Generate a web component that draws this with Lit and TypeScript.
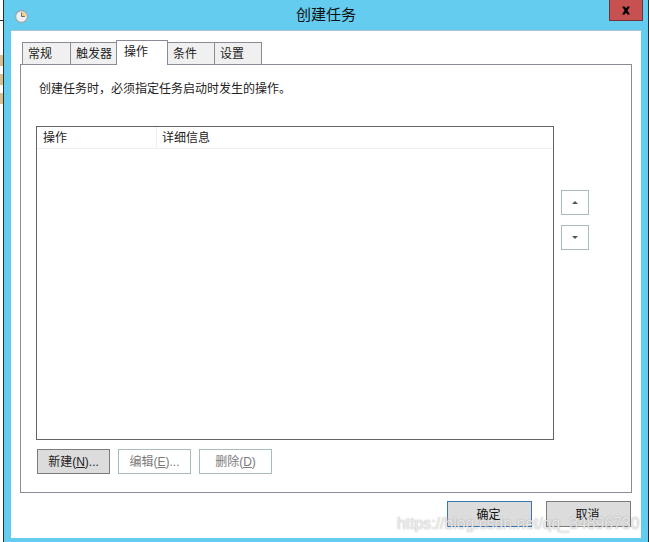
import { LitElement, html, css } from "lit";
import { customElement } from "lit/decorators.js";

@customElement("app-root")
export class AppRoot extends LitElement {
  static styles = css`
    :host {
      display: block;
      width: 649px;
      height: 542px;
      font-family: "Liberation Sans", "Noto Sans CJK SC", sans-serif;
      font-size: 12px;
      color: #222;
    }
    .desktop { display: flex; width: 649px; height: 542px; background: #fff; overflow: hidden; position: relative; }
    .strip { width: 3px; flex: none; display: flex; flex-direction: column; padding-top: 17px; box-sizing: border-box; }
    .cross { height: 8px; width: 3px; background: linear-gradient(#0000 3px, #333 3px, #333 4px, #0000 4px); margin-bottom: 10px; }
    .speck { height: 8px; width: 3px; margin-bottom: 12px; background: #fff; }
    .tan { height: 11px; width: 3px; margin-bottom: 8px; background: #d9c08e; }
    .window {
      flex: 1;
      display: flex;
      flex-direction: column;
      background: #64ccef;
      border-left: 1px solid #22303a;
      border-right: 1px solid #22303a;
      box-sizing: border-box;
      height: 542px;
    }
    .titlebar { height: 30px; flex: none; display: grid; grid-template-columns: 1fr auto 1fr; }
    .ticon { padding: 10px 0 0 11px; display: flex; align-items: flex-start; }
    .ticon svg { display: block; }
    .title { font-size: 15px; line-height: 15px; padding-top: 7px; color: #111; }
    .closewrap { display: flex; justify-content: flex-end; padding-right: 5px; align-items: flex-start; }
    .close {
      width: 34px; height: 21px; box-sizing: border-box;
      background: #c75050;
      border: 1px solid #6f3338; border-top: none;
      display: flex; align-items: center; justify-content: center;
    }
    .body {
      flex: 1;
      margin: 0 7px 4px;
      background: #fff;
      border-top: 1px solid #a9c4d6;
      box-sizing: border-box;
      padding: 9px 9px 0;
      display: flex;
      flex-direction: column;
    }
    .tabs { display: flex; align-items: flex-end; padding-left: 2px; height: 25px; position: relative; z-index: 1; margin-bottom: -1px; }
    .tab {
      height: 23px; box-sizing: border-box;
      background: #f0f0f0;
      border: 1px solid #8c8a97;
      border-left-width: 1px;
      margin-right: -1px;
      padding: 3px 0 0 5px;
      line-height: 16px;
      color: #222;
    }
    .tab.active {
      height: 25px;
      background: #fff;
      border-bottom: none;
      padding: 3px 0 0 7px;
      position: relative;
      z-index: 2;
    }
    .panel {
      width: 612px;
      height: 429px;
      box-sizing: border-box;
      border: 1px solid #8c8a97;
      padding: 16px 0 0 15px;
      display: flex;
      flex-direction: column;
    }
    .desc { padding-left: 3px; line-height: 16px; height: 45px; }
    .middle { display: flex; gap: 7px; height: 314px; }
    .table { width: 518px; height: 314px; box-sizing: border-box; border: 1px solid #646464; background: #fff; }
    .thead { display: flex; height: 21px; border-bottom: 1px solid #efefef; line-height: 23px; }
    .th1 { width: 120px; box-sizing: border-box; padding-left: 6px; border-right: 1px solid #efefef; }
    .th2 { padding-left: 5px; }
    .side { display: flex; flex-direction: column; padding-top: 64px; gap: 10px; }
    .arrow {
      width: 28px; height: 25px; box-sizing: border-box;
      border: 1px solid #a9bcbc;
      display: flex; align-items: center; justify-content: center;
    }
    .actions { display: flex; gap: 8px; padding: 9px 0 0 1px; }
    .btn {
      width: 73px; height: 25px; box-sizing: border-box;
      border: 1px solid #a9bcbc;
      display: flex; align-items: center; justify-content: center;
      color: #7a7a7a;
      background: #fff;
      line-height: 16px;
      white-space: pre;
    }
    .btn.on { background: #dcdcdc; border-color: #7c7c7c; color: #222; }
    .btn u { text-underline-offset: 1px; }
    .footer { display: flex; justify-content: flex-end; gap: 14px; padding: 8px 0 0; margin-right: 1px; }
    .fbtn {
      width: 85px; height: 26px; box-sizing: border-box;
      background: #dcdcdc;
      border: 1px solid #7c7c7c;
      padding: 0 2px 1px 0;
      display: flex; align-items: center; justify-content: center;
      font-size: 12px;
      color: #111;
    }
    .fbtn.def { border-color: #3c74ae; }
    .mark {
      position: absolute;
      left: 397px; top: 514px;
      font-size: 15.8px; line-height: 20px;
      white-space: nowrap;
      color: rgba(243, 243, 243, 0.85);
      text-shadow: 0 0 1.5px rgba(110, 110, 110, 0.6);
      pointer-events: none;
    }
  `;

  render() {
    return html`
      <div class="desktop">
        <div class="strip">
          <div class="cross"></div>
          <div class="speck"></div>
          <div class="tan"></div>
          <div class="tan"></div>
          <div class="tan"></div>
        </div>
        <div class="window">
          <div class="titlebar">
            <div class="ticon">
              <svg width="13" height="13" viewBox="0 0 14 14">
                <circle cx="7" cy="7" r="6.3" fill="#eef0f2" stroke="#9aa3a8" stroke-width="1.2"/>
                <path d="M7 7V2.2A4.8 4.8 0 0 1 11.8 7Z" fill="#f3cd85"/>
                <path d="M7 2.8V7H10.6" fill="none" stroke="#5d6a60" stroke-width="1"/>
              </svg>
            </div>
            <div class="title">创建任务</div>
            <div class="closewrap">
              <div class="close">
                <svg width="10" height="9" viewBox="0 0 10 9">
                  <path d="M1 .5H3.6L5 2.6 6.4.5H9L6.4 4.5 9 8.5H6.4L5 6.4 3.6 8.5H1L3.6 4.5Z" fill="#000"/>
                </svg>
              </div>
            </div>
          </div>
          <div class="body">
            <div class="tabs">
              <div class="tab" style="width:49px">常规</div>
              <div class="tab" style="width:47px">触发器</div>
              <div class="tab active" style="width:52px">操作</div>
              <div class="tab" style="width:48px">条件</div>
              <div class="tab" style="width:48px">设置</div>
            </div>
            <div class="panel">
              <div class="desc">创建任务时，必须指定任务启动时发生的操作。</div>
              <div class="middle">
                <div class="table">
                  <div class="thead">
                    <div class="th1">操作</div>
                    <div class="th2">详细信息</div>
                  </div>
                </div>
                <div class="side">
                  <div class="arrow">
                    <svg width="6" height="3" viewBox="0 0 6 3"><path d="M3 0L6 3H0Z" fill="#555"/></svg>
                  </div>
                  <div class="arrow">
                    <svg width="6" height="3" viewBox="0 0 6 3"><path d="M0 0H6L3 3Z" fill="#555"/></svg>
                  </div>
                </div>
              </div>
              <div class="actions">
                <div class="btn on">新建(<u>N</u>)...</div>
                <div class="btn">编辑(<u>E</u>)...</div>
                <div class="btn">删除(<u>D</u>)</div>
              </div>
            </div>
            <div class="footer">
              <div class="fbtn def">确定</div>
              <div class="fbtn">取消</div>
            </div>
          </div>
        </div>
        <div class="mark">https://blog.csdn.net/qq_34896730</div>
      </div>
    `;
  }
}
